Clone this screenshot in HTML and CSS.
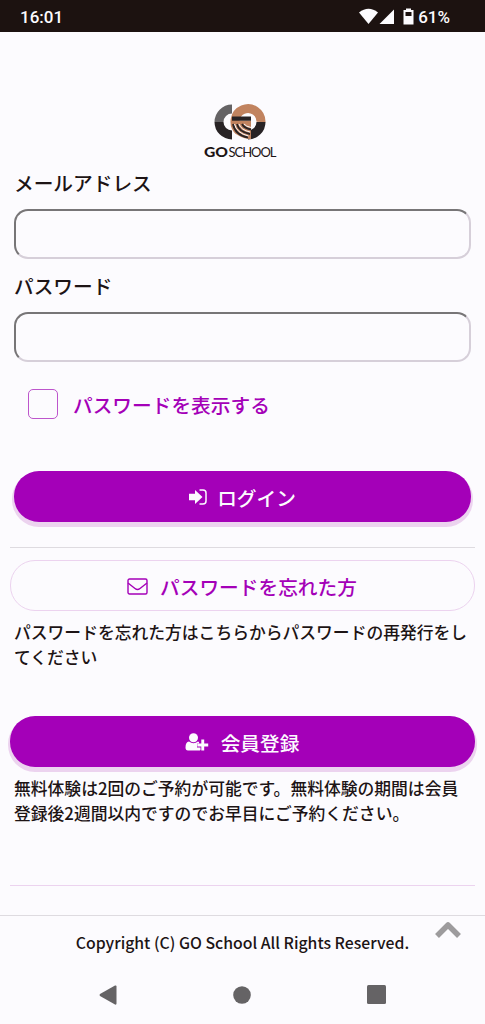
FILE: index.html
```html
<!DOCTYPE html>
<html lang="ja">
<head>
<meta charset="utf-8">
<title>GO SCHOOL</title>
<link rel="stylesheet" href="styles.css">
</head>
<body>
<header class="status">
  <span class="clock">16:01</span>
  <svg class="status-icons" width="56" height="18" viewBox="0 0 56 18">
    <path d="M0 4.500Q9.500-3 19 4.500L9.500 16Z"/>
    <path d="M35 1.500V16H20.500Z"/>
    <path fill-rule="evenodd" d="M44.500 2H47V.5h5V2h2.500v14.500h-10ZM46.500 4v4h6V4Z"/>
  </svg>
  <span class="battery">61%</span>
</header>
<main class="main">
  <svg class="logo" width="80" height="58" viewBox="0 0 80 58">
    <g fill="none" stroke-width="9">
      <path stroke="#656365" d="M31 7A13 13 0 0 0 18 20"/>
      <path stroke="#282325" d="M18 20A13 13 0 0 0 31 33"/>
      <path stroke="#c1835f" d="M38.300 29.200A13 13 0 1 1 60 20"/>
      <path stroke="#282325" d="M60 20A13 13 0 0 1 47 33"/>
    </g>
    <path fill="#c1835f" d="M30.500 18.500h19.500v18.500h-2Q30 35 30.500 18.500Z"/>
    <path fill="#282325" d="M31 14.500h19v4.200H31Z"/>
    <path fill="none" stroke="#282325" stroke-width="1.800" d="M32 22q2 11 15 13.500M36 22q2 8 13 10M41 22q2 4 9 5.500"/>
    <path fill="none" stroke="#fcfbfe" stroke-width="1" d="M33.500 22q2 9 14 12M38 22q2 6 11 8M43 22q2 2.500 7 3.500"/>
    <text class="logo-go" x="3" y="54.500" textLength="24" lengthAdjust="spacingAndGlyphs">GO</text>
    <text class="logo-school" x="27.500" y="54.500" textLength="48" lengthAdjust="spacing">SCHOOL</text>
  </svg>
  <form class="form">
    <label class="label" for="mail">メールアドレス</label>
    <input class="field" id="mail" type="text">
    <label class="label" for="pass">パスワード</label>
    <input class="field" id="pass" type="password">
    <label class="show"><span class="box"></span>パスワードを表示する</label>
    <button class="button login" type="button">
      <svg width="18" height="16" viewBox="0 0 18 16"><path fill="currentColor" d="M0 4.800h6V1l7.500 7L6 15v-3.800H0Z"/><path fill="none" stroke="currentColor" stroke-width="1.500" d="M10.500 1H14a3 3 0 0 1 3 3v8a3 3 0 0 1-3 3h-3.500"/></svg>
      <span>ログイン</span>
    </button>
  </form>
  <hr class="rule">
  <a class="button outline">
    <svg width="21" height="17" viewBox="0 0 21 17" fill="none" stroke="currentColor" stroke-width="1.400"><rect x="1" y="1" width="19" height="15" rx="1.500"/><path d="M1 5l7 5.500q2.500 2 5 0L20 5"/></svg>
    <span>パスワードを忘れた方</span>
  </a>
  <p class="note">パスワードを忘れた方はこちらからパスワードの再発行をしてください</p>
  <a class="button register">
    <svg width="24" height="18" viewBox="0 0 24 18" fill="currentColor"><circle cx="8.500" cy="4.800" r="4.500"/><path d="M4 8.500q4.500 3.500 9 0l1 .5v1.500h-2v4h3.500V17q-.7.500-1.500.5H3Q.5 17.500.5 14.500.5 9 4 8.500Z"/><path d="M16.300 6.500h2.900v4h4v2.900h-4v4h-2.900v-4h-4v-2.900h4Z"/></svg>
    <span>会員登録</span>
  </a>
  <p class="note">無料体験は2回のご予約が可能です。無料体験の期間は会員登録後2週間以内ですのでお早目にご予約ください。</p>
  <hr class="rule end">
</main>
<footer class="footer">
  <span>Copyright (C) GO School All Rights Reserved.</span>
  <svg class="top" width="26" height="18" viewBox="0 0 26 18"><path fill="none" stroke="#9d9b9d" stroke-width="5.500" stroke-linejoin="round" d="M2 15 13 4l11 11"/></svg>
</footer>
<nav class="nav">
  <svg width="18" height="20" viewBox="0 0 18 20"><path d="M1 9Q0 10 1 11L16 19.500q1.500.5 1.500-1v-17q0-1.500-1.500-1Z"/></svg>
  <svg width="18" height="18" viewBox="0 0 18 18"><circle cx="9" cy="9" r="8.800"/></svg>
  <svg width="19" height="19" viewBox="0 0 19 19"><rect width="19" height="19" rx="1.500"/></svg>
</nav>
</body>
</html>
```
FILE: styles.css
```css
* { box-sizing: border-box; }
body {
  margin: 0;
  height: 1024px;
  overflow: hidden;
  display: flex;
  flex-direction: column;
  background: #fcfbfe;
  color: #1d1415;
  font-family: "Noto Sans CJK JP", sans-serif;
  font-weight: 500;
}
.status {
  height: 32px;
  flex: none;
  display: flex;
  align-items: center;
  padding: 1px 35px 0 20px;
  background: #1c1210;
  color: #fcfbfe;
  font: 500 17px Roboto, sans-serif;
}
.status-icons { margin-left: auto; margin-right: 3px; fill: #fcfbfe; }
.main {
  height: 883px;
  flex: none;
  display: flex;
  flex-direction: column;
  padding: 70px 10px 0;
}
.logo { align-self: center; flex: none; margin-right: 4px; }
.logo-go { font: 900 14px Lato, sans-serif; fill: #1d1415; }
.logo-school { font: 400 13px Lato, sans-serif; fill: #1d1415; }
.form { display: flex; flex-direction: column; padding: 0 4px; }
.label { height: 49px; line-height: 46px; font-size: 19.700px; }
.field {
  height: 50px;
  margin: 0 0 4px;
  padding: 0 12px;
  border: 2px solid;
  border-color: #777577 #d6cfd9 #d6cfd9 #777577;
  border-radius: 14px;
  background: transparent;
}
.show {
  display: flex;
  align-items: center;
  gap: 15px;
  height: 32px;
  margin: 22px 0 51px 14px;
  color: #a400b8;
  font-size: 19.700px;
}
.box { width: 30px; height: 30px; border: 1.500px solid #bd55cc; border-radius: 5px; }
.button {
  display: flex;
  flex: none;
  align-items: center;
  justify-content: center;
  height: 51px;
  padding: 0;
  border: 0;
  border-radius: 25px;
  background: #a400b8;
  color: #fcfbfe;
  font: inherit;
  font-size: 19.700px;
  box-shadow: 0 3px 0 2px #ecd3ef;
}
.login { gap: 10px; padding-top: 1px; }
.rule { width: 100%; height: 1px; margin: 25px 0 12px; border: 0; background: #dedbe0; }
.outline {
  gap: 12px;
  padding: 1px 1px 0 0;
  border: 1px solid #ecd3ef;
  background: transparent;
  color: #a400b8;
  box-shadow: none;
}
.note { margin: 9px 4px 0; height: 49px; font-size: 16.800px; line-height: 24.500px; }
.register { margin-top: 47px; gap: 12px; padding: 1px 1px 0 0; }
.end { margin: 60px 0 0; background: #ecd3ef; }
.footer {
  position: relative;
  height: 55px;
  flex: none;
  border-top: 1px solid #dedbe0;
  text-align: center;
  font-size: 15.800px;
  line-height: 53px;
}
.top { position: absolute; right: 24px; top: 5px; }
.nav {
  display: flex;
  align-items: center;
  justify-content: space-between;
  height: 49px;
  padding: 0 99px;
  fill: #656365;
}
```
